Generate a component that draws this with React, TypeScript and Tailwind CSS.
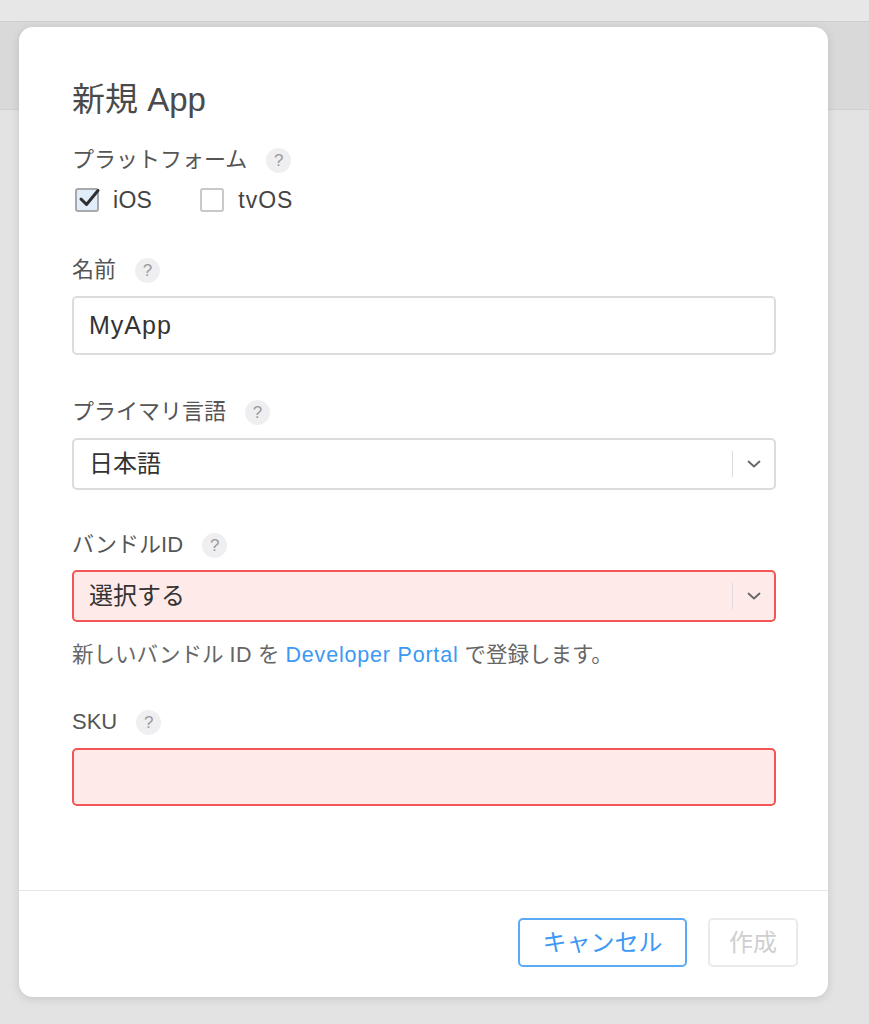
import React from "react";

const font = { fontFamily: '"Liberation Sans", "Noto Sans CJK JP", sans-serif' };

function Help() {
  return (
    <span className="ml-[19px] inline-flex h-[25px] w-[25px] items-center justify-center rounded-full bg-[#efeff1] text-[17px] leading-none text-[#9a9a9a]">
      ?
    </span>
  );
}

function Label({ children }: { children: React.ReactNode }) {
  return (
    <div className="flex h-[28px] items-center text-[22px] leading-[28px] text-[#555555]">
      <span>{children}</span>
      <Help />
    </div>
  );
}

function Chevron() {
  return (
    <svg width="16" height="10" viewBox="0 0 16 10" fill="none">
      <path d="M2.5 2.5 L8 7.5 L13.5 2.5" stroke="#666" strokeWidth="1.8" strokeLinecap="round" strokeLinejoin="round" />
    </svg>
  );
}

function Select({ text, error }: { text: string; error?: boolean }) {
  return (
    <div
      className={
        error
          ? "mt-[11px] flex h-[52px] items-center rounded-[5px] border-2 border-[#f25555] bg-[#ffeaea]"
          : "mt-[12px] flex h-[52px] items-center rounded-[5px] border-2 border-[#dcdcdc] bg-white"
      }
    >
      <span className="flex-1 pl-[15px] text-[24px] text-[#333333]">{text}</span>
      <span className="h-[26px] w-[1px] bg-[#dddddd]" />
      <span className="flex w-[41px] items-center justify-center">
        <Chevron />
      </span>
    </div>
  );
}

export default function App() {
  return (
    <div className="relative min-h-[1024px] w-full bg-[#e3e3e3]" style={font}>
      <div className="h-[21px] bg-[#e7e7e7]" />
      <div className="h-[1px] bg-[#cfcfcf]" />
      <div className="h-[87px] bg-[#d9d9d9]" />
      <div className="h-[1px] bg-[#cfcfcf]" />

      <div className="absolute left-[19px] top-[27px] w-[809px] rounded-[14px] bg-white shadow-[0_2px_10px_rgba(0,0,0,0.12)]">
        <div className="pl-[53px] pr-[52px] pt-[55px]">
          <div className="text-[33px] leading-[36px] text-[#4a4a4a]">新規 App</div>

          <div className="mt-[28px]">
            <Label>プラットフォーム</Label>
          </div>
          <div className="mt-[12px] flex h-[28px] items-center text-[23px] text-[#444444]">
            <span className="relative ml-[3px] inline-block h-[24px] w-[24px] rounded-[3px] border-2 border-[#a7a9ad] bg-[#e2edfb]">
              <svg className="absolute left-[0px] top-[-4px]" width="26" height="24" viewBox="0 0 26 24" fill="none">
                <path d="M4 13 L9.5 18.5 L21 4.5" stroke="#2f2f2f" strokeWidth="3" strokeLinecap="round" strokeLinejoin="round" />
              </svg>
            </span>
            <span className="ml-[14px] tracking-[0.3px]">iOS</span>
            <span className="ml-[48px] inline-block h-[24px] w-[24px] rounded-[3px] border-2 border-[#c9c9c9] bg-white" />
            <span className="ml-[14px] tracking-[1px]">tvOS</span>
          </div>

          <div className="mt-[42px]">
            <Label>名前</Label>
          </div>
          <div className="mt-[12px] flex h-[59px] items-center rounded-[5px] border-2 border-[#dcdcdc] bg-white pl-[15px] text-[25px] tracking-[1px] text-[#333333]">
            MyApp
          </div>

          <div className="mt-[43px]">
            <Label>プライマリ言語</Label>
          </div>
          <Select text="日本語" />

          <div className="mt-[41px]">
            <Label>バンドルID</Label>
          </div>
          <Select text="選択する" error />

          <div className="mt-[19px] h-[28px] text-[21.5px] leading-[28px] text-[#666666]">
            新しいバンドル <span className="tracking-[0.5px]">ID</span> を{" "}
            <span className="tracking-[0.8px] text-[#3c99f5]">Developer Portal</span> で登録します。
          </div>

          <div className="mt-[39px]">
            <Label>SKU</Label>
          </div>
          <div className="mt-[12px] h-[58px] rounded-[5px] border-2 border-[#f25555] bg-[#ffeaea]" />
        </div>

        <div className="mt-[84px] h-[1px] bg-[#e6e6e6]" />

        <div className="flex justify-end gap-[21px] pb-[30px] pr-[30px] pt-[27px]">
          <button className="flex h-[49px] w-[169px] items-center justify-center rounded-[5px] border-2 border-[#5aaaf6] bg-white text-[24px] text-[#3c99f5]">
            キャンセル
          </button>
          <button className="flex h-[49px] w-[90px] items-center justify-center rounded-[5px] border-2 border-[#eaeaea] bg-white text-[24px] text-[#cfcfcf]">
            作成
          </button>
        </div>
      </div>
    </div>
  );
}
